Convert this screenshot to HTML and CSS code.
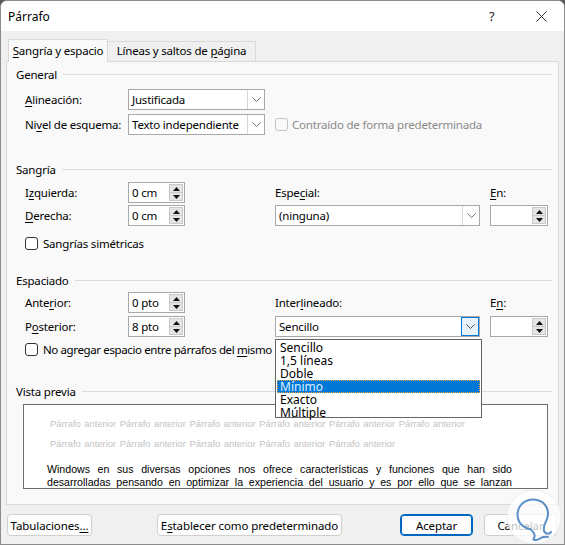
FILE: index.html
```html
<!DOCTYPE html>
<html>
<head>
<meta charset="utf-8">
<link rel="stylesheet" href="styles.css">
</head>
<body>
<div class="window">
  <div class="titlebar">
    <span class="title">Párrafo</span>
    <span class="help">?</span>
    <span class="close"><svg width="11" height="11" viewBox="0 0 11 11"><path d="M0.5 0.5L10.5 10.5M10.5 0.5L0.5 10.5" stroke="#333" stroke-width="1"/></svg></span>
  </div>
  <div class="client">
    <div class="tabs">
      <div class="tab active"><u>S</u>angría y espacio</div>
      <div class="tab">Líneas y saltos de <u>p</u>ágina</div>
    </div>
    <div class="panel">
      <div class="group-title g-general"><span>General</span></div>
      <div class="row first">
        <span class="lbl"><u>A</u>lineación:</span>
        <div class="select w137"><span class="val">Justificada</span><span class="arrow"><svg width="9" height="5" viewBox="0 0 9 5"><path d="M0.5 0.5L4.5 4.5L8.5 0.5" fill="none" stroke="#707070"/></svg></span></div>
      </div>
      <div class="row second">
        <span class="lbl">Ni<u>v</u>el de esquema:</span>
        <div class="select w137"><span class="val">Texto independiente</span><span class="arrow"><svg width="9" height="5" viewBox="0 0 9 5"><path d="M0.5 0.5L4.5 4.5L8.5 0.5" fill="none" stroke="#707070"/></svg></span></div>
        <span class="check disabled"></span>
        <span class="disabled-text">Contraído de forma predeterminada</span>
      </div>

      <div class="group-title g-sangria"><span>Sangría</span></div>
      <div class="grid g1">
        <span class="lbl">I<u>z</u>quierda:</span>
        <div class="spin"><span class="val">0 cm</span><span class="spinbtns"><span class="sb"><svg width="7" height="4" viewBox="0 0 7 4"><path d="M3.5 0L7 4H0Z" fill="#111"/></svg></span><span class="sb"><svg width="7" height="4" viewBox="0 0 7 4"><path d="M0 0H7L3.5 4Z" fill="#111"/></svg></span></span></div>
        <span class="lbl">Espe<u>c</u>ial:</span>
        <span class="lbl"><u>E</u>n:</span>
        <span class="lbl"><u>D</u>erecha:</span>
        <div class="spin"><span class="val">0 cm</span><span class="spinbtns"><span class="sb"><svg width="7" height="4" viewBox="0 0 7 4"><path d="M3.5 0L7 4H0Z" fill="#111"/></svg></span><span class="sb"><svg width="7" height="4" viewBox="0 0 7 4"><path d="M0 0H7L3.5 4Z" fill="#111"/></svg></span></span></div>
        <div class="select w205"><span class="val">(ninguna)</span><span class="arrow"><svg width="9" height="5" viewBox="0 0 9 5"><path d="M0.5 0.5L4.5 4.5L8.5 0.5" fill="none" stroke="#707070"/></svg></span></div>
        <div class="spin w58"><span class="val"></span><span class="spinbtns"><span class="sb"><svg width="7" height="4" viewBox="0 0 7 4"><path d="M3.5 0L7 4H0Z" fill="#111"/></svg></span><span class="sb"><svg width="7" height="4" viewBox="0 0 7 4"><path d="M0 0H7L3.5 4Z" fill="#111"/></svg></span></span></div>
      </div>
      <div class="checkrow c1"><span class="check"></span><span>San<u>g</u>rías simétricas</span></div>

      <div class="group-title g-esp"><span>Espaciado</span></div>
      <div class="grid g2">
        <span class="lbl">Ante<u>r</u>ior:</span>
        <div class="spin"><span class="val">0 pto</span><span class="spinbtns"><span class="sb"><svg width="7" height="4" viewBox="0 0 7 4"><path d="M3.5 0L7 4H0Z" fill="#111"/></svg></span><span class="sb"><svg width="7" height="4" viewBox="0 0 7 4"><path d="M0 0H7L3.5 4Z" fill="#111"/></svg></span></span></div>
        <span class="lbl">Inter<u>l</u>ineado:</span>
        <span class="lbl">E<u>n</u>:</span>
        <span class="lbl">P<u>o</u>sterior:</span>
        <div class="spin"><span class="val">8 pto</span><span class="spinbtns"><span class="sb"><svg width="7" height="4" viewBox="0 0 7 4"><path d="M3.5 0L7 4H0Z" fill="#111"/></svg></span><span class="sb"><svg width="7" height="4" viewBox="0 0 7 4"><path d="M0 0H7L3.5 4Z" fill="#111"/></svg></span></span></div>
        <div class="select w205"><span class="val">Sencillo</span><span class="arrow focused"><svg width="9" height="5" viewBox="0 0 9 5"><path d="M0.5 0.5L4.5 4.5L8.5 0.5" fill="none" stroke="#505050"/></svg></span></div>
        <div class="spin w58"><span class="val"></span><span class="spinbtns"><span class="sb"><svg width="7" height="4" viewBox="0 0 7 4"><path d="M3.5 0L7 4H0Z" fill="#111"/></svg></span><span class="sb"><svg width="7" height="4" viewBox="0 0 7 4"><path d="M0 0H7L3.5 4Z" fill="#111"/></svg></span></span></div>
      </div>
      <div class="checkrow c2"><span class="check"></span><span class="tight">No agregar espacio entre párrafos del <u>m</u>ismo</span></div>

      <div class="group-title g-vista"><span>Vista previa</span></div>
      <div class="preview">
        <p class="prev-gray">Párrafo anterior Párrafo anterior Párrafo anterior Párrafo anterior Párrafo anterior Párrafo anterior Párrafo anterior Párrafo anterior Párrafo anterior Párrafo anterior Párrafo anterior</p>
        <p class="prev-main">Windows en sus diversas opciones nos ofrece características y funciones que han sido desarrolladas pensando en optimizar la experiencia del usuario y es por ello que se lanzan diferentes actualizaciones que permiten mejorar la forma en que trabajamos cada día con el equipo</p>
      </div>

      <ul class="dropdown">
        <li>Sencillo</li>
        <li>1,5 líneas</li>
        <li>Doble</li>
        <li class="sel">Mínimo</li>
        <li>Exacto</li>
        <li>Múltiple</li>
      </ul>
    </div>
    <div class="buttons">
      <button class="btn b-tab">Tabulaciones<u>...</u></button>
      <button class="btn b-def">E<u>s</u>tablecer como predeterminado</button>
      <span class="spacer"></span>
      <button class="btn primary b-ok">Aceptar</button>
      <button class="btn b-cancel">Cancelar</button>
    </div>
  </div>
  <svg class="watermark" width="56" height="56" viewBox="0 0 56 56">
    <circle cx="28" cy="28" r="27" fill="#ffffff" fill-opacity="0.75" stroke="#e6eef6" stroke-width="1"/>
    <path d="M24 40 C14 38 10 30 12 22 C14 13 23 9 31 11 C40 13 44 22 41 30 C39 35 37 37 38 42 C40 46 44 45 45 43" fill="none" stroke="#5b8fc9" stroke-width="2" stroke-linecap="round"/>
    <path d="M24 40 C27 42 30 46 28 49 C26 51 30 52 33 50 C36 48 38 47 42 48" fill="none" stroke="#5b8fc9" stroke-width="2" stroke-linecap="round"/>
  </svg>
</div>
</body>
</html>
```

FILE: styles.css
```css
* { box-sizing: border-box; }
html, body { margin: 0; padding: 0; }
body {
  width: 565px;
  height: 545px;
  background: #5a5a5a;
  font-family: "Noto Sans", "Open Sans", sans-serif;
  font-size: 11.5px;
  letter-spacing: -0.2px;
  color: #000;
  overflow: hidden;
}
u { text-decoration: underline; text-underline-offset: 2px; }
.window {
  position: relative;
  width: 565px;
  height: 545px;
  background: #f0f0f0;
  border: 1px solid #8c8c8c;
  border-radius: 7px 7px 0 0;
  overflow: hidden;
}
.titlebar {
  height: 30px;
  background: #ffffff;
  display: flex;
  align-items: center;
  padding-left: 7px;
}
.title { font-size: 12px; flex: 1; letter-spacing: 0; }
.help { font-size: 13px; width: 47px; color: #222; margin-top: -1px; }
.close { width: 28px; display: flex; align-items: center; }
.client { padding: 0 5px; }
.tabs {
  display: flex;
  align-items: flex-end;
  height: 30px;
  padding-left: 3px;
}
.tab {
  height: 20px;
  line-height: 18px;
  border: 1px solid #d9d9d9;
  border-bottom: none;
  background: #f0f0f0;
  margin-left: -1px;
}
.tab.active {
  height: 23px;
  line-height: 22px;
  background: #f9f9f9;
  position: relative;
  z-index: 2;
  margin-bottom: -1px;
  width: 100px;
  text-align: center;
  padding: 0;
}
.tab:not(.active) { width: 149px; text-align: center; padding: 0; }
.panel {
  position: relative;
  height: 444px;
  background: #f9f9f9;
  border: 1px solid #d9d9d9;
  padding: 4px 6px 0 9px;
}
.group-title {
  display: flex;
  align-items: center;
  height: 16px;
}
.group-title span { padding-right: 6px; }
.group-title::after {
  content: "";
  flex: 1;
  height: 1px;
  background: #dcdcdc;
}
.row {
  display: flex;
  align-items: center;
  height: 21px;
  padding-left: 9px;
}
.row.first { margin-top: 7px; }
.row.second { margin-top: 4px; }
.lbl { width: 103px; flex: none; white-space: nowrap; }
.select {
  height: 21px;
  background: #fff;
  border: 1px solid #a8a8a8;
  display: flex;
  align-items: center;
  flex: none;
}
.select .val { flex: 1; padding-left: 3px; white-space: nowrap; overflow: hidden; }
.select .arrow {
  width: 17px;
  height: 19px;
  border-left: 1px solid #d6d6d6;
  display: flex;
  align-items: center;
  justify-content: center;
}
.select .arrow.focused {
  width: 18px;
  border: 1px solid #0078d7;
  background: #e5f1fb;
}
.w137 { width: 137px; }
.w205 { width: 205px; }
.check {
  width: 13px;
  height: 13px;
  border: 1px solid #333;
  border-radius: 3px;
  background: #fff;
  flex: none;
}
.check.disabled { border-color: #c4c4c4; background: #f9f9f9; margin-left: 10px; margin-right: 4px; }
.disabled-text { color: #8a8a8a; white-space: nowrap; }
.g-sangria { margin-top: 26px; }
.grid {
  display: grid;
  grid-template-columns: 103px 147px 215px 58px;
  padding-left: 9px;
  align-items: center;
}
.g1 { margin-top: 5px; grid-template-rows: 21px 21px; row-gap: 2px; }
.g2 { margin-top: 4px; grid-template-rows: 21px 21px; row-gap: 3px; }
.spin {
  width: 57px;
  height: 21px;
  background: #fff;
  border: 1px solid #a8a8a8;
  display: flex;
  align-items: stretch;
}
.spin.w58 { width: 58px; }
.spin .val { flex: 1; padding-left: 3px; line-height: 19px; }
.spinbtns {
  width: 15px;
  display: flex;
  flex-direction: column;
  padding: 1px 1px 1px 0;
}
.sb {
  flex: 1;
  background: #e5e5e5;
  border: 1px solid #c9c9c9;
  display: flex;
  align-items: center;
  justify-content: center;
}
.sb + .sb { border-top: none; }
.checkrow {
  display: flex;
  align-items: center;
  gap: 5px;
  padding-left: 9px;
  height: 14px;
  white-space: nowrap;
}
.tight { letter-spacing: -0.38px; }
.c1 { margin-top: 10px; }
.c2 { margin-top: 5px; }
.g-esp { margin-top: 22px; }
.g-vista { margin-top: 27px; }
.preview {
  margin: 5px 0 0 7px;
  width: 525px;
  height: 85px;
  background: #fff;
  border: 1px solid #6d6d6d;
  overflow: hidden;
  padding: 9px 35px 0 23px;
  font-family: "Liberation Sans", Arial, sans-serif;
  letter-spacing: 0;
}
.prev-gray {
  margin: 0;
  padding-left: 3px;
  font-size: 9.4px;
  line-height: 20px;
  color: #c3c3c3;
  width: 432px;
  word-spacing: 1px;
}
.prev-main {
  margin: 9px 0 0 0;
  font-size: 10.6px;
  line-height: 12.5px;
  text-align: justify;
  color: #000;
}
.dropdown {
  position: absolute;
  left: 268px;
  top: 277px;
  width: 207px;
  height: 79px;
  margin: 0;
  padding: 1px 1px;
  list-style: none;
  background: #fff;
  border: 1px solid #646464;
  z-index: 5;
  font-size: 12px;
  letter-spacing: 0;
}
.dropdown li {
  height: 13px;
  line-height: 13px;
  padding-left: 3px;
}
.dropdown li.sel {
  background: #0078d7;
  color: #dfeefb;
  outline: 1px dotted #f2a23c;
  outline-offset: -1px;
}
.buttons {
  display: flex;
  align-items: center;
  height: 40px;
  padding: 0 2px 0 1px;
}
.spacer { flex: 1; }
.btn {
  height: 22px;
  background: #fdfdfd;
  border: 1px solid #d0d0d0;
  border-radius: 4px;
  font-family: "Noto Sans", "Open Sans", sans-serif;
  font-size: 11.5px;
  letter-spacing: -0.1px;
  color: #000;
  padding: 0;
}
.b-tab { width: 85px; }
.b-def { width: 185px; margin-left: 65px; }
.b-ok { width: 73px; border: 1px solid #0067c0; box-shadow: inset 0 0 0 1px #0067c0; }
.b-cancel { width: 73px; margin-left: 11px; }
.watermark {
  position: absolute;
  left: 505px;
  top: 488px;
  z-index: 10;
}
```
